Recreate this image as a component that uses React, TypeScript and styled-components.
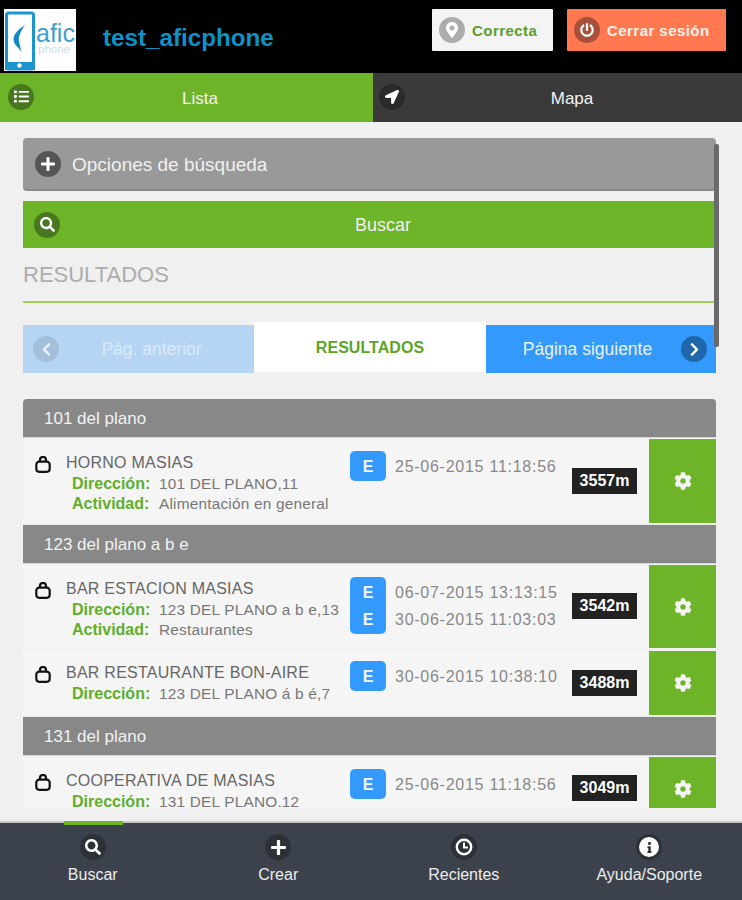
import React from "react";
import styled, { createGlobalStyle } from "styled-components";
import {
  FaList, FaLocationArrow, FaPlus, FaSearch, FaChevronLeft, FaChevronRight,
  FaCog, FaMapMarkerAlt, FaPowerOff, FaInfo,
} from "react-icons/fa";

const Global = createGlobalStyle`
  html, body { margin: 0; padding: 0; background: #f0f0f0; }
  * { box-sizing: border-box; }
  body { font-family: "Liberation Sans", Arial, sans-serif; }
`;

const Page = styled.div`
  width: 742px; height: 900px; display: flex; flex-direction: column; overflow: hidden;
`;
const Header = styled.header`
  height: 73px; flex: none; background: #000; display: flex; align-items: flex-start; padding: 9px 16px 0 4px;
`;
const LogoBox = styled.div`
  width: 72px; height: 62px; background: #fff; flex: none;
  svg { display: block; }
`;
const Title = styled.h1`
  margin: 14px 0 0 27px; font-size: 24.2px; line-height: 30px; font-weight: 700; color: #0b93c9;
`;
const HeaderActions = styled.div`
  margin-left: auto; display: flex; gap: 14px;
`;
const StatusButton = styled.div<{ $bg: string; $fg: string; $w: number }>`
  width: ${p => p.$w}px; height: 42px; background: ${p => p.$bg}; color: ${p => p.$fg};
  display: flex; align-items: center; gap: 7px; padding-left: 7px;
  font-size: 15px; font-weight: 700; letter-spacing: 0.45px; border-radius: 1px;
`;
const Circle = styled.span<{ $bg: string; $size?: number; $fg?: string }>`
  width: ${p => p.$size ?? 26}px; height: ${p => p.$size ?? 26}px; border-radius: 50%; flex: none;
  background: ${p => p.$bg}; color: ${p => p.$fg ?? "#fff"};
  display: flex; align-items: center; justify-content: center;
`;
const Tabs = styled.nav`
  height: 49px; flex: none; display: grid; grid-template-columns: 372px 370px;
`;
const Tab = styled.div<{ $active?: boolean; $pl: number; $pr: number }>`
  display: flex; align-items: center; padding: 0 ${p => p.$pr}px 2px ${p => p.$pl}px;
  background: ${p => (p.$active ? "#6db428" : "#3a3a3a")};
  border-left: ${p => (p.$active ? "0" : "1px solid #6db428")};
  color: #f4f4f4; font-size: 17px;
`;
const Grow = styled.span`
  flex: 1; text-align: center;
`;
const TabLabel = styled(Grow)`
  padding-top: 4px;
`;
const Main = styled.main`
  position: relative; flex: 1; min-height: 0; background: #f0f0f0;
  padding: 16px 26px 13px 23px; display: flex; flex-direction: column;
`;
const ScrollThumb = styled.div`
  position: absolute; left: 714px; top: 22px; width: 5px; height: 203px; background: #6a6a6a; border-radius: 2px;
`;
const OptionsBar = styled.div`
  height: 53px; flex: none; background: #999; border-radius: 4px; border-bottom: 2px solid #8a8a8a;
  display: flex; align-items: center; gap: 11px; padding: 0 12px; color: #f0f0f0; font-size: 19px; line-height: 26px;
`;
const OptionsLabel = styled.span`
  padding-top: 3px;
`;
const SearchBar = styled.div`
  height: 47px; flex: none; margin-top: 10px; background: #6db428; color: #f0f0f0; font-size: 18px;
  display: flex; align-items: center; padding: 0 10px 0 11px;
`;
const SearchLabel = styled(Grow)`
  padding-top: 2px;
`;
const Heading = styled.h2`
  margin: 0; height: 55px; flex: none; padding-top: 14px; border-bottom: 2px solid #a3d057;
  color: #adadad; font-size: 22px; font-weight: 400; line-height: 25px;
`;
const Pager = styled.div`
  margin-top: 22px; height: 48px; flex: none; display: grid; grid-template-columns: 231px 232px 230px;
`;
const PageBtn = styled.div<{ $bg: string; $fg: string }>`
  background: ${p => p.$bg}; color: ${p => p.$fg}; display: flex; align-items: center; font-size: 17.5px;
`;
const PagePrev = styled(PageBtn)`
  padding-left: 10px; padding-right: 10px;
`;
const PageNext = styled(PageBtn)`
  padding-left: 8px; padding-right: 9px;
`;
const PageCurrent = styled.div`
  margin-top: -3px; height: 50px; background: #fff; color: #5ca51f; font-size: 16px; font-weight: 700;
  display: flex; align-items: center; justify-content: center; letter-spacing: 0.05px; padding-top: 2px;
`;
const ListClip = styled.div`
  margin-top: 26px; flex: 1; min-height: 0; overflow: hidden;
`;
const GroupHeader = styled.div<{ $first?: boolean }>`
  height: 39px; background: #888; color: #f2f2f2; font-size: 17px; padding: 2px 0 0 21px;
  display: flex; align-items: center; border-bottom: 1px solid #d8d8d8;
  border-radius: ${p => (p.$first ? "4px 4px 0 0" : "0")};
`;
const Row = styled.div<{ $h: number; $pad: number }>`
  height: ${p => p.$h}px; background: #f5f5f5; border-bottom: 1px solid #ebebeb;
  display: grid; grid-template-columns: 43px 284px 36px 186px 65px 12px 67px;
  align-items: start; padding-top: ${p => p.$pad}px; position: relative;
`;
const LockCell = styled.div`
  padding: 5px 0 0 12px;
  svg { display: block; }
`;
const Info = styled.div`
  font-size: 16px; line-height: 20.5px; color: #666; letter-spacing: 0.25px; padding-top: 2px;
`;
const Name = styled.div`
  white-space: nowrap;
`;
const Field = styled.div`
  display: grid; grid-template-columns: 87px auto; padding-left: 6px; white-space: nowrap; color: #777;
  font-size: 15.4px; letter-spacing: 0.2px;
`;
const FieldLabel = styled.span`
  color: #5fae2c; font-weight: 700; font-size: 16px; letter-spacing: 0;
`;
const Badge = styled.div`
  width: 36px; background: #3399fb; border-radius: 5px; padding: 1.5px 0;
  color: #f4f9ff; font-size: 16px; font-weight: 700; line-height: 27px; text-align: center;
`;
const Dates = styled.div`
  padding: 1.5px 0 0 9px; font-size: 16px; line-height: 27px; color: #888; letter-spacing: 0.74px; white-space: nowrap;
`;
const Distance = styled.div<{ $pad: number }>`
  align-self: center; margin-top: ${p => -p.$pad - 1}px; height: 26px; width: 65px; background: #222; color: #fff;
  font-size: 16px; font-weight: 700; display: flex; align-items: center; justify-content: center;
`;
const Gear = styled.div`
  position: absolute; right: 0; top: 1px; bottom: 1px; width: 67px; background: #6db428; color: #f4f4f4;
  display: flex; align-items: center; justify-content: center;
`;
const Footer = styled.footer`
  height: 79px; flex: none; background: #3c424c; border-top: 2px solid #c4c6c8;
  display: grid; grid-template-columns: repeat(4, 1fr);
`;
const FootItem = styled.div<{ $active?: boolean }>`
  display: flex; flex-direction: column; align-items: center; padding-top: 11px; gap: 6px; position: relative;
  color: #eceded; font-size: 16px;
  &::before {
    content: ""; display: ${p => (p.$active ? "block" : "none")};
    position: absolute; top: -2px; left: 64px; width: 59px; height: 4px; background: #6db428;
  }
`;
const InfoDot = styled.span`
  width: 20px; height: 20px; border-radius: 50%; background: #fff; color: #2c3138;
  display: flex; align-items: center; justify-content: center;
`;

const Lock = () => (
  <svg width="16" height="17" viewBox="0 0 16 17" fill="none" stroke="#111" strokeWidth="2.2">
    <rect x="1.3" y="5.6" width="13.4" height="10.2" rx="3" />
    <path d="M5 5.6V4a3 3 0 0 1 6 0V5.6" />
  </svg>
);

const Logo = () => (
  <svg width="72" height="62" viewBox="0 0 72 62">
    <rect x="2.5" y="4" width="27" height="56" rx="2" fill="none" stroke="#1b95d0" strokeWidth="3" />
    <rect x="1" y="53" width="30" height="8" fill="#1b95d0" />
    <circle cx="15.5" cy="56.5" r="2.2" fill="#fff" />
    <path d="M21 16C13 21 8 27 10 33C11 37 15 38 17 43C17 37 14 33 15 28C16 24 18 20 21 16z" fill="#1189c4" />
    <text x="32" y="33" fontFamily="'Liberation Sans', sans-serif" fontSize="25" fill="#3f9fd0">afic</text>
    <text x="34" y="44" fontFamily="'Liberation Sans', sans-serif" fontSize="11.5" fill="#c9e0ec">phone</text>
  </svg>
);

const ClockIcon = () => (
  <svg width="18" height="18" viewBox="0 0 18 18" fill="none" stroke="#fff">
    <circle cx="9" cy="9" r="7.2" strokeWidth="2.4" />
    <path d="M9 4.5V9.6H13" strokeWidth="2" />
  </svg>
);

type RowData = {
  name: string; dir: string; act?: string; dates: string[]; dist: string; h: number; pad: number;
};

const Item = ({ r }: { r: RowData }) => (
  <Row $h={r.h} $pad={r.pad}>
    <LockCell><Lock /></LockCell>
    <Info>
      <Name>{r.name}</Name>
      <Field><FieldLabel>Dirección:</FieldLabel><span>{r.dir}</span></Field>
      {r.act && <Field><FieldLabel>Actividad:</FieldLabel><span>{r.act}</span></Field>}
    </Info>
    <Badge>{r.dates.map((d, i) => <div key={i}>E</div>)}</Badge>
    <Dates>{r.dates.map((d, i) => <div key={i}>{d}</div>)}</Dates>
    <Distance $pad={r.pad}>{r.dist}</Distance>
    <Gear><FaCog size={18} /></Gear>
  </Row>
);

export default function App() {
  return (
    <Page>
      <Global />
      <Header>
        <LogoBox><Logo /></LogoBox>
        <Title>test_aficphone</Title>
        <HeaderActions>
          <StatusButton $bg="#f4f4f4" $fg="#5a9e2a" $w={121}>
            <Circle $bg="#acacac"><FaMapMarkerAlt size={16} /></Circle>Correcta
          </StatusButton>
          <StatusButton $bg="#ff7850" $fg="#fdf0e8" $w={159}>
            <Circle $bg="#a9503a"><FaPowerOff size={14} /></Circle>Cerrar sesión
          </StatusButton>
        </HeaderActions>
      </Header>
      <Tabs>
        <Tab $active $pl={8} $pr={6}>
          <Circle $bg="#47771f"><FaList size={15} /></Circle><TabLabel>Lista</TabLabel>
        </Tab>
        <Tab $pl={6} $pr={3}>
          <Circle $bg="#2a2a2a"><FaLocationArrow size={14} /></Circle><TabLabel>Mapa</TabLabel>
        </Tab>
      </Tabs>
      <Main>
        <ScrollThumb />
        <OptionsBar>
          <Circle $bg="#555"><FaPlus size={16} /></Circle><OptionsLabel>Opciones de búsqueda</OptionsLabel>
        </OptionsBar>
        <SearchBar>
          <Circle $bg="#47771f"><FaSearch size={15} /></Circle><SearchLabel>Buscar</SearchLabel>
        </SearchBar>
        <Heading>RESULTADOS</Heading>
        <Pager>
          <PagePrev $bg="#b6d5f5" $fg="#dbe9f8">
            <Circle $bg="#a3bfdc" $fg="#e8f1fa"><FaChevronLeft size={15} /></Circle><Grow>Pág. anterior</Grow>
          </PagePrev>
          <PageCurrent>RESULTADOS</PageCurrent>
          <PageNext $bg="#3399fb" $fg="#e8f2ff">
            <Grow>Página siguiente</Grow><Circle $bg="#1f66ab"><FaChevronRight size={15} /></Circle>
          </PageNext>
        </Pager>
        <ListClip>
          <GroupHeader $first>101 del plano</GroupHeader>
          <Item r={{ name: "HORNO MASIAS", dir: "101 DEL PLANO,11", act: "Alimentación en general", dates: ["25-06-2015 11:18:56"], dist: "3557m", h: 87, pad: 13 }} />
          <GroupHeader>123 del plano a b e</GroupHeader>
          <Item r={{ name: "BAR ESTACION MASIAS", dir: "123 DEL PLANO a b e,13", act: "Restaurantes", dates: ["06-07-2015 13:13:15", "30-06-2015 11:03:03"], dist: "3542m", h: 86, pad: 13 }} />
          <Item r={{ name: "BAR RESTAURANTE BON-AIRE", dir: "123 DEL PLANO á b é,7", dates: ["30-06-2015 10:38:10"], dist: "3488m", h: 67, pad: 11 }} />
          <GroupHeader>131 del plano</GroupHeader>
          <Item r={{ name: "COOPERATIVA DE MASIAS", dir: "131 DEL PLANO.12", dates: ["25-06-2015 11:18:56"], dist: "3049m", h: 66, pad: 13 }} />
        </ListClip>
      </Main>
      <Footer>
        <FootItem $active><Circle $bg="#2c3138"><FaSearch size={16} /></Circle>Buscar</FootItem>
        <FootItem><Circle $bg="#2c3138"><FaPlus size={17} /></Circle>Crear</FootItem>
        <FootItem><Circle $bg="#2c3138"><ClockIcon /></Circle>Recientes</FootItem>
        <FootItem><Circle $bg="#2c3138"><InfoDot><FaInfo size={11} /></InfoDot></Circle>Ayuda/Soporte</FootItem>
      </Footer>
    </Page>
  );
}
